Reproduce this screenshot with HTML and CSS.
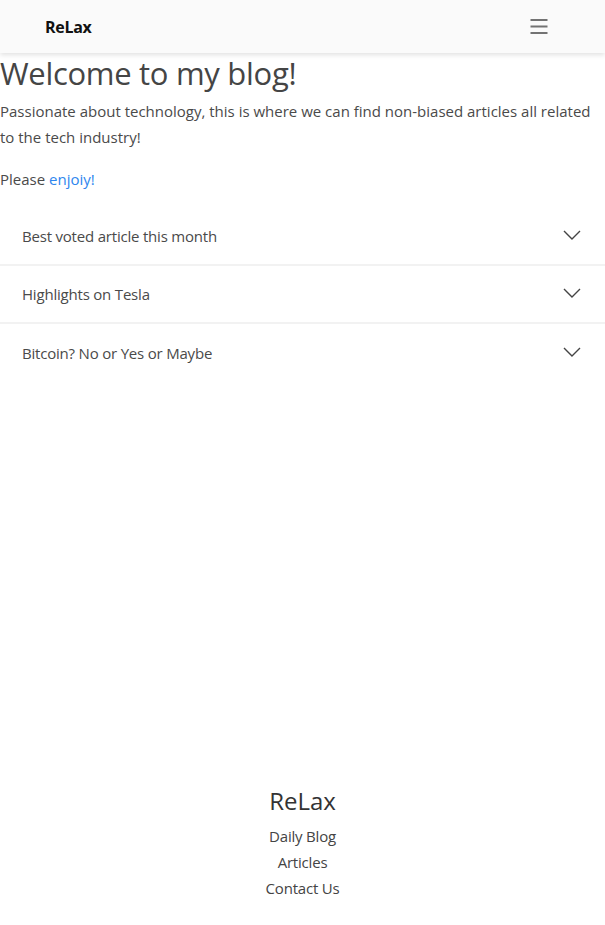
FILE: index.html
```html
<!DOCTYPE html>
<html>
<head>
<meta charset="utf-8">
<link rel="stylesheet" href="styles.css">
</head>
<body>
<nav class="navbar">
  <span class="brand">ReLax</span>
  <span class="toggler">
    <svg width="18" height="16" viewBox="0 0 18 16"><path d="M0.5 2h17M0.5 8.5h17M0.5 15h17" stroke="#737373" stroke-width="2" fill="none"/></svg>
  </span>
</nav>
<main class="content">
  <h1 class="title">Welcome to my blog!</h1>
  <p class="lead">Passionate about technology, this is where we can find non-biased articles all related to the tech industry!</p>
  <p class="lead">Please <a class="link" href="#">enjoiy!</a></p>
  <div class="accordion">
    <div class="acc-item"><span>Best voted article this month</span><svg class="chev" width="18" height="10" viewBox="0 0 18 10"><path d="M1 1l8 8 8-8" stroke="#444" stroke-width="1.4" fill="none"/></svg></div>
    <div class="acc-item"><span>Highlights on Tesla</span><svg class="chev" width="18" height="10" viewBox="0 0 18 10"><path d="M1 1l8 8 8-8" stroke="#444" stroke-width="1.4" fill="none"/></svg></div>
    <div class="acc-item"><span>Bitcoin? No or Yes or Maybe</span><svg class="chev" width="18" height="10" viewBox="0 0 18 10"><path d="M1 1l8 8 8-8" stroke="#444" stroke-width="1.4" fill="none"/></svg></div>
  </div>
</main>
<footer class="footer">
  <div class="footer-brand">ReLax</div>
  <div class="footer-link">Daily Blog</div>
  <div class="footer-link">Articles</div>
  <div class="footer-link">Contact Us</div>
</footer>
</body>
</html>
```
FILE: styles.css
```css
html, body {
  margin: 0;
  padding: 0;
}
body {
  font-family: "Open Sans", "Noto Sans", sans-serif;
  color: #4a4a4a;
  background: #fff;
  width: 605px;
  height: 925px;
  display: flex;
  flex-direction: column;
}
.navbar {
  height: 53px;
  background: #fafafa;
  box-shadow: 0 2px 5px rgba(0,0,0,0.12);
  display: flex;
  align-items: center;
  justify-content: space-between;
  padding: 0 57px 0 45px;
}
.brand {
  font-weight: 700;
  font-size: 16px;
  color: #111;
  letter-spacing: -0.3px;
}
.toggler {
  display: flex;
  align-items: center;
  margin-top: -1px;
}
.content {
  flex: 1;
}
.title {
  font-weight: 400;
  font-size: 31px;
  margin: 0 0 5px 0;
  line-height: 40px;
  color: #454545;
  letter-spacing: -0.3px;
}
.lead {
  font-size: 15px;
  line-height: 26px;
  margin: 0 0 16px 0;
  letter-spacing: 0;
}
.link {
  color: #2e86ee;
  text-decoration: none;
}
.accordion {
  margin-top: 16px;
}
.acc-item {
  height: 58px;
  display: flex;
  align-items: center;
  justify-content: space-between;
  padding: 0 24px 0 22px;
  border-bottom: 2px solid #f2f2f2;
  font-size: 15px;
  letter-spacing: -0.2px;
  box-sizing: border-box;
}
.acc-item:last-child {
  border-bottom: none;
}
.chev {
  margin-top: -3px;
}
.footer {
  text-align: center;
  padding-bottom: 24px;
}
.footer-brand {
  font-size: 24px;
  line-height: 32px;
  color: #333;
  margin-bottom: 6px;
}
.footer-link {
  font-size: 15px;
  line-height: 26px;
  color: #444;
  letter-spacing: -0.2px;
}
```
